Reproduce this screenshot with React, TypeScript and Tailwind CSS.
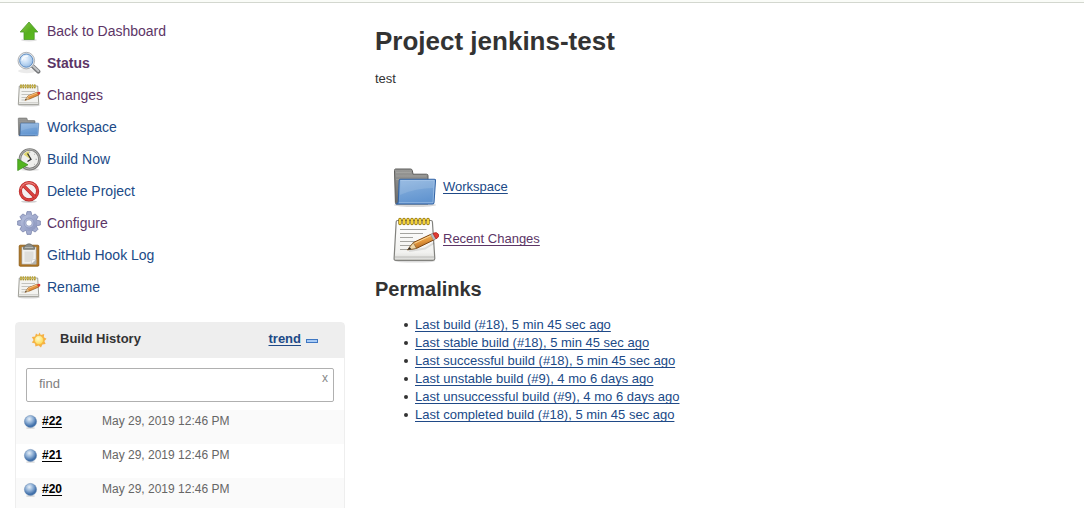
import React, { useState } from "react";

interface IconProps {
  className?: string;
}

const ArrowIcon = ({ className }: IconProps) => (
  <svg viewBox="0 0 24 24" className={className} aria-hidden="true">
    <defs>
      <linearGradient id="arrow" x1="0" y1="0" x2="1" y2="1">
        <stop offset="0" stopColor="#93c94c" />
        <stop offset="0.5" stopColor="#58b020" />
        <stop offset="1" stopColor="#5cc01c" />
      </linearGradient>
    </defs>
    <ellipse cx="12" cy="21" rx="8" ry="1.5" fill="#000" opacity="0.12" />
    <path
      d="M12 3 L20.8 13 H17.2 V20.5 H7 V13 H3.2 Z"
      fill="url(#arrow)"
      stroke="#4d9a2b"
      strokeWidth="0.8"
      strokeLinejoin="round"
    />
  </svg>
);

const SearchIcon = ({ className }: IconProps) => (
  <svg viewBox="0 0 24 24" className={className} aria-hidden="true">
    <defs>
      <radialGradient id="lens" cx="0.4" cy="0.35" r="0.7">
        <stop offset="0" stopColor="#f2f8ff" />
        <stop offset="0.5" stopColor="#c4dcf5" />
        <stop offset="1" stopColor="#94b9e2" />
      </radialGradient>
    </defs>
    <ellipse cx="10" cy="20" rx="9" ry="2.2" fill="#000" opacity="0.08" />
    <path d="M15.5 15 L21.3 20.5" stroke="#77797c" strokeWidth="4.2" strokeLinecap="round" />
    <path d="M15.5 14.5 L21.3 20" stroke="#c2c4c7" strokeWidth="2" strokeLinecap="round" />
    <circle cx="9.3" cy="9.6" r="8.3" fill="#e4e6e8" stroke="#9fa3a8" strokeWidth="0.8" />
    <circle cx="9.3" cy="9.6" r="6.6" fill="url(#lens)" stroke="#5f8fc6" strokeWidth="1" />
    <path d="M5 9.5 C5.5 6.3 7.5 5 11 5" fill="none" stroke="#fff" strokeWidth="1.3" opacity="0.8" />
  </svg>
);

const NoteIcon = ({ className }: IconProps) => (
  <svg viewBox="0 0 24 24" className={className} aria-hidden="true">
    <ellipse cx="12" cy="22.3" rx="11" ry="1.2" fill="#000" opacity="0.15" />
    <path
      d="M2.3 3 H20.7 L21.8 21.6 H1.3 Z"
      fill="#f3f3f0"
      stroke="#96968f"
      strokeWidth="0.9"
      strokeLinejoin="round"
    />
    <path d="M1.8 19.8 H21.4" stroke="#c2c2bd" strokeWidth="0.9" />
    <path d="M4.5 8.5 H18 M4.5 11.5 H14 M4.5 14.5 H10 M4.5 17 H8" stroke="#bdbdb8" strokeWidth="0.9" />
    <path
      d="M4 2 V4.6 M6.3 2 V4.6 M8.6 2 V4.6 M10.9 2 V4.6 M13.2 2 V4.6 M15.5 2 V4.6 M17.8 2 V4.6"
      stroke="#a8932e"
      strokeWidth="1.7"
      strokeLinecap="round"
    />
    <path
      d="M4 2.6 V4 M6.3 2.6 V4 M8.6 2.6 V4 M10.9 2.6 V4 M13.2 2.6 V4 M15.5 2.6 V4 M17.8 2.6 V4"
      stroke="#e9d25a"
      strokeWidth="0.9"
    />
    <path d="M8 17.3 L11 12.9 L20 9.2 L21.8 12 L12.5 16 Z" fill="#e3903c" stroke="#955619" strokeWidth="0.7" />
    <path d="M11 13.5 L20.2 9.8" stroke="#f7c988" strokeWidth="0.9" />
    <path d="M8 17.3 L10.6 13.4 L12 16.2 Z" fill="#d8bd8b" />
    <path d="M8 17.3 L9 15.8 L9.8 16.8 Z" fill="#333" />
    <path d="M20 9.2 Q22.5 8 23.3 9.4 Q23.8 11 21.8 12 Z" fill="#d93a31" />
  </svg>
);

const NotepadIcon = ({ className }: IconProps) => (
  <svg viewBox="0 0 48 48" className={className} aria-hidden="true">
    <defs>
      <linearGradient id="paper" x1="0" y1="0" x2="0" y2="1">
        <stop offset="0" stopColor="#ffffff" />
        <stop offset="0.8" stopColor="#f2f2f0" />
        <stop offset="1" stopColor="#d9d9d6" />
      </linearGradient>
      <linearGradient id="pencil" x1="0.3" y1="0" x2="0.7" y2="1">
        <stop offset="0" stopColor="#f8c46a" />
        <stop offset="0.5" stopColor="#e3963c" />
        <stop offset="1" stopColor="#9a5418" />
      </linearGradient>
    </defs>
    <ellipse cx="23" cy="46" rx="20" ry="1.6" fill="#000" opacity="0.14" />
    <path
      d="M5.5 5.5 H39 Q40.3 5.5 40.4 6.8 L42.8 43.5 Q42.8 45.3 41 45.3 H3.7 Q2 45.3 2.1 43.5 L4.2 6.8 Q4.3 5.5 5.5 5.5 Z"
      fill="url(#paper)"
      stroke="#82827e"
      strokeWidth="1.2"
    />
    <path d="M3 42 H42" stroke="#b3b3af" strokeWidth="0.8" />
    <path
      d="M8 14.5 H34.5 M8 18.5 H31 M8 22.5 H21 M8 26.5 H28 M8 30.5 H22 M8 34.5 H15"
      stroke="#a4a4a0"
      strokeWidth="1.1"
    />
    <path
      d="M8 4.5 V8.5 M12 4.5 V8.5 M16 4.5 V8.5 M20 4.5 V8.5 M24 4.5 V8.5 M28 4.5 V8.5 M32 4.5 V8.5 M36 4.5 V8.5"
      stroke="#8a6c08"
      strokeWidth="3.4"
      strokeLinecap="round"
    />
    <path
      d="M8 4.5 V8.5 M12 4.5 V8.5 M16 4.5 V8.5 M20 4.5 V8.5 M24 4.5 V8.5 M28 4.5 V8.5 M32 4.5 V8.5 M36 4.5 V8.5"
      stroke="#f3d235"
      strokeWidth="2"
      strokeLinecap="round"
    />
    <path d="M17 36 L33 33.5 L42 28" stroke="#000" strokeWidth="2" opacity="0.1" fill="none" />
    <path
      d="M15.5 34.8 L21.3 27.6 L39.5 19 L42.5 24.6 L24.5 33.4 Z"
      fill="url(#pencil)"
      stroke="#7e4714"
      strokeWidth="1"
      strokeLinejoin="round"
    />
    <path d="M22 28.5 L39.5 20.3" stroke="#fbd694" strokeWidth="1" />
    <path d="M15.5 34.8 L21.3 27.6 L24.5 33.4 Z" fill="#efd7a8" stroke="#7c5a2c" strokeWidth="0.6" />
    <path d="M15.5 34.8 L17.8 31.9 L19.2 34.2 Z" fill="#2f2f2f" />
    <path d="M38.5 19.5 L41 18.3 L44 23.9 L41.5 25.1 Z" fill="#b9bdc0" stroke="#85888a" strokeWidth="0.5" />
    <path
      d="M41 18.3 Q44.8 16.4 46.6 19.4 Q47.5 22.2 44 23.9 Z"
      fill="#e23b32"
      stroke="#a51d1a"
      strokeWidth="0.7"
    />
  </svg>
);

const FolderIcon = ({ className }: IconProps) => (
  <svg viewBox="0 0 48 48" className={className} aria-hidden="true">
    <defs>
      <linearGradient id="folderBack" x1="0" y1="0" x2="0" y2="1">
        <stop offset="0" stopColor="#9a9a98" />
        <stop offset="1" stopColor="#686866" />
      </linearGradient>
      <linearGradient id="folderFront" x1="0" y1="0" x2="0.3" y2="1">
        <stop offset="0" stopColor="#8db4df" />
        <stop offset="1" stopColor="#6295d0" />
      </linearGradient>
    </defs>
    <ellipse cx="23" cy="42" rx="21" ry="2" fill="#000" opacity="0.15" />
    <path
      d="M3.5 6 H18.5 Q20 6 20.3 7.5 L21 11.2 H34.5 Q36 11.2 36 12.7 V41 H4.5 Q3.5 41 3.4 39.5 L2.5 7.5 Q2.5 6 3.5 6 Z"
      fill="url(#folderBack)"
      stroke="#5c5c5a"
      strokeWidth="1"
    />
    <path d="M4 9.5 H19 M4 13 H34 M4 16.5 H8" stroke="#b4b4b2" strokeWidth="0.7" opacity="0.6" />
    <path
      d="M8.3 16.3 H42.5 Q43.6 16.3 43.5 17.5 L42 39.5 Q41.9 41 40.4 41 H4.2 Q6.2 40.5 6.3 38.5 L7.2 17.5 Q7.3 16.3 8.3 16.3 Z"
      fill="url(#folderFront)"
      stroke="#3566a6"
      strokeWidth="1.1"
      strokeLinejoin="round"
    />
    <path d="M8.5 17.5 H42.3 L41 39.7 H7" fill="none" stroke="#c2daf3" strokeWidth="0.8" opacity="0.6" />
    <path d="M8.6 18 H42 L41.4 25 Q24 25 7.8 32 Z" fill="#fff" opacity="0.12" />
  </svg>
);

const ClockIcon = ({ className }: IconProps) => (
  <svg viewBox="0 0 24 24" className={className} aria-hidden="true">
    <ellipse cx="13" cy="22.8" rx="9" ry="1.1" fill="#000" opacity="0.12" />
    <circle cx="12.7" cy="12.3" r="9.8" fill="#efefec" stroke="#7b7b79" strokeWidth="2.6" />
    <circle cx="12.7" cy="12.3" r="9.8" fill="none" stroke="#b5b5b3" strokeWidth="1" />
    <path d="M13 12 L6.5 7.5 A8 8 0 0 1 11.8 4.3 Z" fill="#e0d670" />
    <path d="M12.7 4.5 V6 M20 12.3 H18.5 M18 6.8 L17.2 7.6 M18 17.8 L17.2 17" stroke="#999" strokeWidth="0.8" />
    <path d="M10.5 6.5 L14 12.2 L10.5 14.5" fill="none" stroke="#333" strokeWidth="1.3" />
    <path
      d="M0.7 12 L11 17.8 L0.7 23.6 Z"
      fill="#52b51f"
      stroke="#3a8a1c"
      strokeWidth="0.7"
      strokeLinejoin="round"
    />
  </svg>
);

const DeleteIcon = ({ className }: IconProps) => (
  <svg viewBox="0 0 24 24" className={className} aria-hidden="true">
    <ellipse cx="12" cy="22.6" rx="8" ry="1.2" fill="#000" opacity="0.18" />
    <circle cx="12" cy="12.2" r="8.6" fill="#f4f1f1" stroke="#b02625" strokeWidth="3.2" />
    <circle cx="12" cy="12.2" r="8.6" fill="none" stroke="#d94340" strokeWidth="2.2" />
    <path d="M6.2 6.4 L17.8 18" stroke="#b02625" strokeWidth="3.4" />
    <path d="M6 6.2 L18 18.2" stroke="#d94340" strokeWidth="2.4" />
    <path d="M3.7 10 A8.6 8.6 0 0 1 18 6.2" fill="none" stroke="#f09a96" strokeWidth="0.8" />
  </svg>
);

const GearIcon = ({ className }: IconProps) => (
  <svg viewBox="0 0 24 24" className={className} aria-hidden="true">
    <defs>
      <linearGradient id="gear" x1="0" y1="0" x2="1" y2="1">
        <stop offset="0" stopColor="#b9c2de" />
        <stop offset="1" stopColor="#8792bc" />
      </linearGradient>
    </defs>
    <g fill="#a3acce" stroke="#747fa9" strokeWidth="0.7" strokeLinejoin="round">
      <path d="M9 5 L10 0.6 H14 L15 5 V19 L14 23.4 H10 L9 19 Z" />
      <path d="M9 5 L10 1.2 H14 L15 5 V19 L14 22.8 H10 L9 19 Z" transform="rotate(45 12 12)" />
      <path d="M9 5 L10 0.6 H14 L15 5 V19 L14 23.4 H10 L9 19 Z" transform="rotate(90 12 12)" />
      <path d="M9 5 L10 1.2 H14 L15 5 V19 L14 22.8 H10 L9 19 Z" transform="rotate(135 12 12)" />
    </g>
    <circle cx="12" cy="12" r="8.2" fill="url(#gear)" />
    <circle cx="12" cy="12" r="4.9" fill="#b5bedc" stroke="#8590b8" strokeWidth="0.7" />
    <circle cx="12" cy="12" r="3.2" fill="#fff" stroke="#7a86b0" strokeWidth="0.7" />
  </svg>
);

const ClipboardIcon = ({ className }: IconProps) => (
  <svg viewBox="0 0 24 24" className={className} aria-hidden="true">
    <rect x="2.2" y="2.2" width="19.6" height="21" rx="1" fill="#b47a28" stroke="#85560f" strokeWidth="0.8" />
    <path d="M4.8 4 H19.2 V21.2 H4.8 Z" fill="#f1f1ef" stroke="#8d8d88" strokeWidth="0.5" />
    <path d="M7.5 8.5 H16.5 V15 L13 19 H7.5 Z" fill="#dededb" />
    <path d="M14.2 21.2 L19.2 16.2 V21.2 Z" fill="#b4b4b0" />
    <path d="M14.2 21.2 L14.8 17 L19.2 16.2 Z" fill="#fff" stroke="#aaa" strokeWidth="0.4" />
    <path
      d="M6.5 6.3 V4.3 Q6.5 3 8.5 2.8 Q9.5 0.8 12 0.8 Q14.5 0.8 15.5 2.8 Q17.5 3 17.5 4.3 V6.3 Z"
      fill="#8b8d89"
      stroke="#62645f"
      strokeWidth="0.7"
    />
    <path d="M8 4.5 H16" stroke="#bfc1bd" strokeWidth="0.8" />
  </svg>
);

const SunIcon = ({ className }: IconProps) => (
  <svg viewBox="0 0 16 16" className={className} aria-hidden="true">
    <defs>
      <radialGradient id="sun" cx="0.4" cy="0.35" r="0.7">
        <stop offset="0" stopColor="#fffbd0" />
        <stop offset="1" stopColor="#fbd94f" />
      </radialGradient>
    </defs>
    <path
      d="M8.6 0.6 L9.8 3 L13.2 2 L12.8 5.2 L15.5 6.8 L13.4 9 L14.6 12 L11.4 12.6 L10 15.4 L7.6 13.4 L4.4 14.6 L4 11.6 L0.8 10.6 L2.6 8 L0.8 5 L4 4.6 L5 1.6 L7.2 3 Z"
      fill="#f6b145"
    />
    <circle cx="8" cy="8" r="4.5" fill="url(#sun)" stroke="#f3b33a" strokeWidth="0.6" />
  </svg>
);

const BallIcon = ({ className }: IconProps) => (
  <svg viewBox="0 0 16 16" className={className} aria-hidden="true">
    <defs>
      <radialGradient id="ball" cx="0.4" cy="0.3" r="0.7">
        <stop offset="0" stopColor="#e6eff8" />
        <stop offset="0.45" stopColor="#8fb0d6" />
        <stop offset="0.85" stopColor="#3f6ea8" />
        <stop offset="1" stopColor="#4a78ad" />
      </radialGradient>
    </defs>
    <ellipse cx="8" cy="14.9" rx="5" ry="0.9" fill="#000" opacity="0.15" />
    <circle cx="8" cy="8" r="6.5" fill="url(#ball)" stroke="#5a7fab" strokeWidth="0.5" />
  </svg>
);

const tasks = [
  { label: "Back to Dashboard", Icon: ArrowIcon, color: "text-[#5c3566]" },
  { label: "Status", Icon: SearchIcon, color: "text-[#5c3566] font-bold" },
  { label: "Changes", Icon: NoteIcon, color: "text-[#5c3566]" },
  { label: "Workspace", Icon: FolderIcon, color: "text-[#204a87]" },
  { label: "Build Now", Icon: ClockIcon, color: "text-[#204a87]" },
  { label: "Delete Project", Icon: DeleteIcon, color: "text-[#204a87]" },
  { label: "Configure", Icon: GearIcon, color: "text-[#5c3566]" },
  { label: "GitHub Hook Log", Icon: ClipboardIcon, color: "text-[#204a87]" },
  { label: "Rename", Icon: NoteIcon, color: "text-[#204a87]" },
];

const builds = [
  { id: "#22", date: "May 29, 2019 12:46 PM" },
  { id: "#21", date: "May 29, 2019 12:46 PM" },
  { id: "#20", date: "May 29, 2019 12:46 PM" },
];

const permalinks = [
  "Last build (#18), 5 min 45 sec ago",
  "Last stable build (#18), 5 min 45 sec ago",
  "Last successful build (#18), 5 min 45 sec ago",
  "Last unstable build (#9), 4 mo 6 days ago",
  "Last unsuccessful build (#9), 4 mo 6 days ago",
  "Last completed build (#18), 5 min 45 sec ago",
];

const TaskList = () => (
  <nav>
    <ul>
      {tasks.map(({ label, Icon, color }) => (
        <li key={label}>
          <a href="#" className={`flex h-8 items-center gap-1.5 pl-0.5 text-sm ${color}`}>
            <Icon className="h-6 w-6 shrink-0" />
            {label}
          </a>
        </li>
      ))}
    </ul>
  </nav>
);

const BuildHistory = () => {
  const [query, setQuery] = useState("");

  return (
    <section className="mt-[19px] rounded-t border border-[#eeeeee]">
      <div className="flex h-[35px] items-center bg-[#eeeeee] pr-[26px] pb-1 pl-[15px]">
        <SunIcon className="mt-0.5 h-4 w-4" />
        <h2 className="ml-[13px] flex-1 text-[13px] font-bold">Build History</h2>
        <a
          href="#"
          className="text-[13px] font-bold text-[#204a87] underline underline-offset-2 [text-decoration-skip-ink:none]"
        >
          trend
        </a>
        <button
          type="button"
          aria-label="Collapse"
          className="mt-1 ml-[5px] h-1 w-3 border border-[#3f77c2] bg-[#a9cbf5]"
        />
      </div>
      <div className="relative px-2.5 pt-[10px] pb-2">
        <input
          type="text"
          aria-label="find"
          placeholder="find"
          value={query}
          onChange={(e) => setQuery(e.target.value)}
          className="block h-[34px] w-full rounded-xs border border-[#b0b0b0] px-3 pb-1 text-[13px] outline-none placeholder:text-[#808080]"
        />
        <button
          type="button"
          aria-label="Clear"
          onClick={() => setQuery("")}
          className="absolute top-3 right-4 text-xs leading-4 text-[#888888]"
        >
          x
        </button>
      </div>
      <table className="w-full text-xs">
        <tbody>
          {builds.map((build) => (
            <tr key={build.id} className="h-[34px] odd:bg-[#fafafa]">
              <td className="w-[86px] pt-[3px] pl-[7px] align-top">
                <div className="flex items-center gap-1">
                  <BallIcon className="h-[15px] w-[15px]" />
                  <a
                    href="#"
                    className="font-bold text-black underline underline-offset-2 [text-decoration-skip-ink:none]"
                  >
                    {build.id}
                  </a>
                </div>
              </td>
              <td className="pt-[3px] align-top text-[#666666]">{build.date}</td>
            </tr>
          ))}
        </tbody>
      </table>
    </section>
  );
};

export default function App() {
  return (
    <div className="h-screen overflow-hidden bg-white font-['Liberation_Sans',Arial,sans-serif] text-[13px] text-[#333333]">
      <header className="h-[3px] border-b border-[#d3d7cf] bg-[#fafcf8]" />
      <div className="flex">
        <aside className="w-[345px] shrink-0 pt-3 pl-[15px]">
          <TaskList />
          <BuildHistory />
        </aside>
        <main className="min-w-0 flex-1 pt-5 pl-[30px]">
          <h1 className="text-[26px] leading-9 font-bold">Project jenkins-test</h1>
          <p className="mt-[11px] leading-[18px]">test</p>
          <div className="mt-[75px] flex flex-col gap-1 pl-[17px]">
            <a href="#" className="flex h-12 items-center text-[#204a87]">
              <FolderIcon className="h-12 w-12" />
              <span className="ml-[3px] underline underline-offset-2 [text-decoration-skip-ink:none]">Workspace</span>
            </a>
            <a href="#" className="flex h-12 items-center text-[#5c3566]">
              <NotepadIcon className="h-12 w-12" />
              <span className="ml-[3px] underline underline-offset-2 [text-decoration-skip-ink:none]">
                Recent Changes
              </span>
            </a>
          </div>
          <h2 className="mt-3 text-xl leading-7 font-bold">Permalinks</h2>
          <ul className="mt-[13px] pl-[29px] leading-[18px]">
            {permalinks.map((text) => (
              <li
                key={text}
                className="flex items-center before:mr-[7px] before:h-1 before:w-1 before:rounded-full before:bg-[#333333]"
              >
                <a
                  href="#"
                  className="text-[#204a87] underline underline-offset-2 [text-decoration-skip-ink:none]"
                >
                  {text}
                </a>
              </li>
            ))}
          </ul>
        </main>
      </div>
    </div>
  );
}
